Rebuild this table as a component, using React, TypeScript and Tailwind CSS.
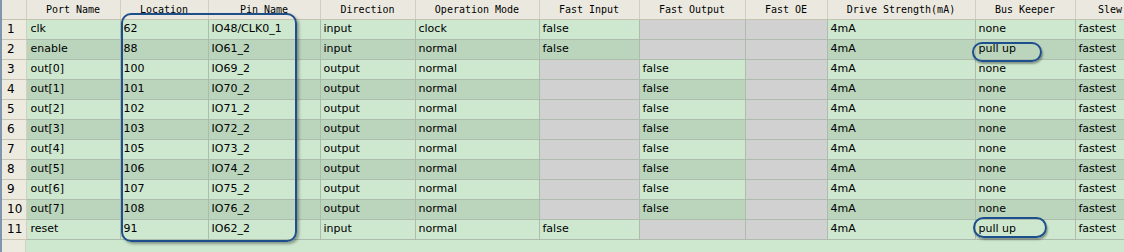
import React from "react";

type Row = {
  port: string;
  loc: string;
  pin: string;
  dir: string;
  mode: string;
  fastIn: string | null;
  fastOut: string | null;
  keeper: string;
};

const rows: Row[] = [
  { port: "clk", loc: "62", pin: "IO48/CLK0_1", dir: "input", mode: "clock", fastIn: "false", fastOut: null, keeper: "none" },
  { port: "enable", loc: "88", pin: "IO61_2", dir: "input", mode: "normal", fastIn: "false", fastOut: null, keeper: "pull up" },
  { port: "out[0]", loc: "100", pin: "IO69_2", dir: "output", mode: "normal", fastIn: null, fastOut: "false", keeper: "none" },
  { port: "out[1]", loc: "101", pin: "IO70_2", dir: "output", mode: "normal", fastIn: null, fastOut: "false", keeper: "none" },
  { port: "out[2]", loc: "102", pin: "IO71_2", dir: "output", mode: "normal", fastIn: null, fastOut: "false", keeper: "none" },
  { port: "out[3]", loc: "103", pin: "IO72_2", dir: "output", mode: "normal", fastIn: null, fastOut: "false", keeper: "none" },
  { port: "out[4]", loc: "105", pin: "IO73_2", dir: "output", mode: "normal", fastIn: null, fastOut: "false", keeper: "none" },
  { port: "out[5]", loc: "106", pin: "IO74_2", dir: "output", mode: "normal", fastIn: null, fastOut: "false", keeper: "none" },
  { port: "out[6]", loc: "107", pin: "IO75_2", dir: "output", mode: "normal", fastIn: null, fastOut: "false", keeper: "none" },
  { port: "out[7]", loc: "108", pin: "IO76_2", dir: "output", mode: "normal", fastIn: null, fastOut: "false", keeper: "none" },
  { port: "reset", loc: "91", pin: "IO62_2", dir: "input", mode: "normal", fastIn: "false", fastOut: null, keeper: "pull up" },
];

const headers = [
  "",
  "Port Name",
  "Location",
  "Pin Name",
  "Direction",
  "Operation Mode",
  "Fast Input",
  "Fast Output",
  "Fast OE",
  "Drive Strength(mA)",
  "Bus Keeper",
  "Slew",
];

const widths = [24, 94, 88, 112, 95, 124, 100, 106, 82, 148, 100, 70];

const App = () => {
  return (
    <div className="relative w-[1124px] h-[252px] overflow-hidden bg-[#cde8cf] border-l-2 border-[#8096ae] flex flex-col">
      <table
        className="table-fixed border-collapse text-[11px] text-black shrink-0"
        style={{ width: widths.reduce((a, b) => a + b, 0) }}
      >
        <colgroup>
          {widths.map((w, i) => (
            <col key={i} style={{ width: w }} />
          ))}
        </colgroup>
        <thead>
          <tr className="h-[19px] bg-[#ebe9df]">
            {headers.map((h, i) => (
              <th
                key={i}
                className="p-0 font-normal text-center text-[10px] text-black border-b border-b-[#c5c2b2] border-r border-r-[#d2cfc0] whitespace-nowrap"
                style={{ fontFamily: '"DejaVu Sans Mono", monospace' }}
              >
                {h}
              </th>
            ))}
          </tr>
        </thead>
        <tbody style={{ fontFamily: '"DejaVu Sans", sans-serif' }}>
          {rows.map((r, i) => {
            const bg = i % 2 === 0 ? "bg-[#cde8cf]" : "bg-[#bad5bc]";
            const cell = `h-[20px] p-0 pl-[3px] text-left border-b border-r border-[#aebcae] whitespace-nowrap ${bg}`;
            const gray = "h-[20px] p-0 border-b border-r border-[#aebcae] bg-[#d1d1d1]";
            return (
              <tr key={i}>
                <td className="h-[20px] p-0 pl-[5px] text-[12px] border-b border-b-[#c9c6b6] border-r border-r-[#d2cfc0] bg-[#edebe0]">
                  {i + 1}
                </td>
                <td className={cell + " pl-[4px]"}>{r.port}</td>
                <td className={cell}>{r.loc}</td>
                <td className={cell}>{r.pin}</td>
                <td className={cell}>{r.dir}</td>
                <td className={cell}>{r.mode}</td>
                {r.fastIn ? <td className={cell}>{r.fastIn}</td> : <td className={gray} />}
                {r.fastOut ? <td className={cell}>{r.fastOut}</td> : <td className={gray} />}
                <td className={gray} />
                <td className={cell}>4mA</td>
                <td className={cell}>{r.keeper}</td>
                <td className={cell}>fastest</td>
              </tr>
            );
          })}
        </tbody>
      </table>
      <div className="flex-1 flex">
        <div className="w-[24px] bg-[#edebe0] border-r border-[#d2cfc0]" />
      </div>

      {/* hand-drawn highlight marks */}
      <div className="absolute left-[119px] top-[13px] w-[176px] h-[229px] rounded-[10px] border-2 border-[#1d4f8c] shadow-[2px_2px_3px_rgba(0,0,0,0.35)]" />
      <div className="absolute left-[970px] top-[42px] w-[70px] h-[20px] rounded-full border-2 border-[#1d4f8c] shadow-[1px_2px_2px_rgba(0,0,0,0.35)]" />
      <div className="absolute left-[971px] top-[217px] w-[74px] h-[21px] rounded-full border-2 border-[#1d4f8c] shadow-[1px_2px_2px_rgba(0,0,0,0.35)]" />
    </div>
  );
};

export default App;
